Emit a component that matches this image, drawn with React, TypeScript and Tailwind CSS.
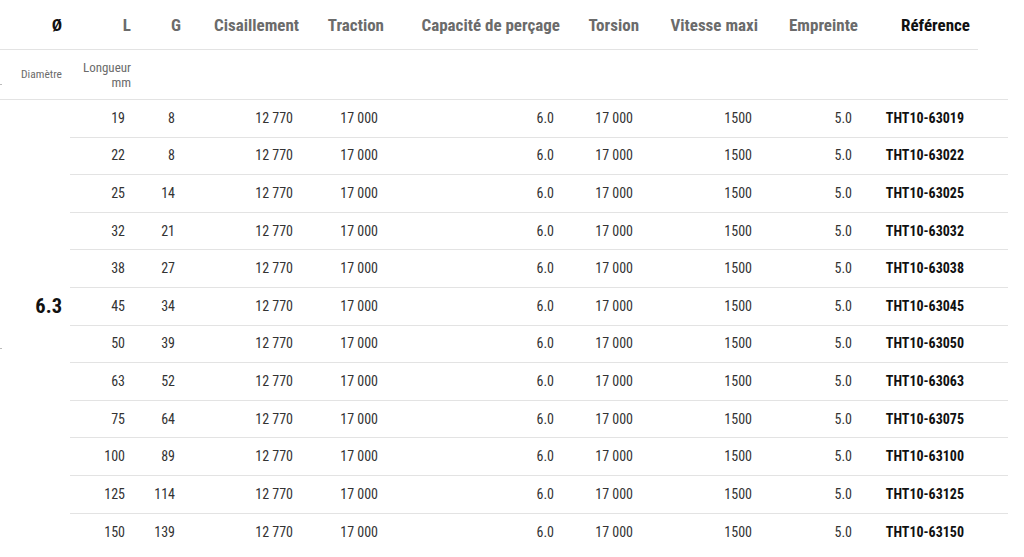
import React from "react";

const rows = [
  ["19", "8", "63019"],
  ["22", "8", "63022"],
  ["25", "14", "63025"],
  ["32", "21", "63032"],
  ["38", "27", "63038"],
  ["45", "34", "63045"],
  ["50", "39", "63050"],
  ["63", "52", "63063"],
  ["75", "64", "63075"],
  ["100", "89", "63100"],
  ["125", "114", "63125"],
  ["150", "139", "63150"],
];

const font = { fontFamily: '"Roboto Condensed", "Liberation Sans Narrow", Roboto, sans-serif' };

export default function App() {
  return (
    <div className="w-[1024px] h-[557px] overflow-hidden bg-white relative" style={font}>
      <div className="absolute left-0 top-[84px] w-[2px] h-[1px] bg-[#bbb]" />
      <div className="absolute left-0 top-[348px] w-[2px] h-[1px] bg-[#bbb]" />
      {/* header */}
      <div className="grid grid-cols-[70px_69px_50px_118px_85px_176px_79px_119px_100px_112px] w-[978px] h-[50px] pt-[3px] border-b border-[#e3e3e3] items-center text-[17px] font-bold text-[#6b6b6b] text-right">
        <div className="pr-2 text-[#111]">Ø</div>
        <div className="pr-2">L</div>
        <div className="pr-2">G</div>
        <div className="pr-2">Cisaillement</div>
        <div className="pr-2">Traction</div>
        <div className="pr-2">Capacité de perçage</div>
        <div className="pr-2">Torsion</div>
        <div className="pr-2">Vitesse maxi</div>
        <div className="pr-2">Empreinte</div>
        <div className="pr-2 text-[#111]">Référence</div>
      </div>
      {/* sub header */}
      <div className="grid grid-cols-[70px_69px_1fr] w-[1008px] h-[50px] border-b border-[#e3e3e3] items-center text-[#6b6b6b] text-right">
        <div className="pr-2 text-[11.5px]">Diamètre</div>
        <div className="pr-2 text-[13px] leading-[15px]">
          Longueur
          <br />
          mm
        </div>
        <div />
      </div>
      {/* body */}
      <div className="flex w-[1008px]">
        <div className="w-[70px] h-[413.6px] flex items-center justify-end pr-2 text-[20.5px] font-bold text-[#111]">
          6.3
        </div>
        <div className="flex flex-col w-[938px]">
          {rows.map(([l, g, ref], i) => (
            <div
              key={ref}
              className={
                "grid grid-cols-[69px_50px_118px_85px_176px_79px_119px_100px_112px_30px] h-[37.6px] items-center text-[14px] text-[#333] text-right " +
                (i < rows.length - 1 ? "border-b border-[#e3e3e3]" : "")
              }
            >
              <div className="pr-[14px]">{l}</div>
              <div className="pr-[14px]">{g}</div>
              <div className="pr-[14px]">12 770</div>
              <div className="pr-[14px]">17 000</div>
              <div className="pr-[14px]">6.0</div>
              <div className="pr-[14px]">17 000</div>
              <div className="pr-[14px]">1500</div>
              <div className="pr-[14px]">5.0</div>
              <div className="pr-[14px] font-bold text-[#111]">THT10-{ref}</div>
              <div />
            </div>
          ))}
        </div>
      </div>
    </div>
  );
}
